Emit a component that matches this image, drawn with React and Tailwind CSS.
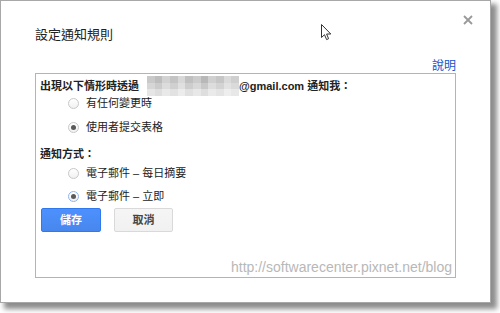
import React, { useState } from "react";

const mosaic = [
  "#c9c9c9", "#bdbdbd", "#d2d2d2", "#c4c4c4", "#d8d8d8", "#c0c0c0", "#cccccc", "#b8b8b8", "#d0d0d0", "#c6c6c6", "#dadada", "#cfcfcf",
  "#d6d6d6", "#cbcbcb", "#dcdcdc", "#d0d0d0", "#e0e0e0", "#cdcdcd", "#d8d8d8", "#c8c8c8", "#dddddd", "#d3d3d3", "#e2e2e2", "#dadada",
  "#e6e6e6", "#dedede", "#e9e9e9", "#e2e2e2", "#ececec", "#e0e0e0", "#e8e8e8", "#dedede", "#eaeaea", "#e4e4e4", "#eeeeee", "#e8e8e8",
];

const Radio = ({ checked, focused, label, onClick }) => (
  <div className="flex items-center h-[16px] pl-[28px] cursor-pointer" onClick={onClick}>
    <span
      className={`w-[11px] h-[11px] rounded-full border bg-gradient-to-b from-white to-[#f1f1f1] flex items-center justify-center ${
        focused ? "border-[#8fb4f0]" : "border-[#c8c8c8]"
      }`}
    >
      {checked && <span className="w-[5px] h-[5px] rounded-full bg-[#5a5a5a]" />}
    </span>
    <span className="ml-[7px] text-[11px] text-[#222]">{label}</span>
  </div>
);

const App = () => {
  const [when, setWhen] = useState("form");
  const [how, setHow] = useState("now");

  return (
    <div
      className="w-[500px] h-[313px] bg-white relative overflow-hidden"
      style={{ fontFamily: '"Liberation Sans", Arial, "Noto Sans CJK TC", sans-serif' }}
    >
      <div className="w-[491px] h-[303px] bg-white border border-[#a8a8a8] shadow-[5px_5px_5px_1px_rgba(0,0,0,0.45)] flex flex-col px-[34px] relative">
        <div className="flex justify-between items-start">
          <h1 className="mt-[26px] text-[13px] leading-[16px] text-[#222] font-normal">設定通知規則</h1>
          <button className="mt-[14px] -mr-[17px] w-[10px] h-[10px] text-[#999]">
            <svg width="10" height="10" viewBox="0 0 10 10">
              <path d="M1 1 L9 9 M9 1 L1 9" stroke="currentColor" strokeWidth="1.8" />
            </svg>
          </button>
        </div>

        <div className="flex justify-end mt-[16px]">
          <a href="#" className="text-[12px] leading-[14px] text-[#1155cc]">說明</a>
        </div>

        <div className="w-[421px] h-[205px] border border-[#b4b4b4] flex flex-col pl-[4px] pr-[3px]">
          <div className="flex items-center h-[16px] mt-[4px] text-[11px] font-bold text-[#222]">
            <span>出現以下情形時透過</span>
            <span className="ml-[8px] w-[92px] h-[20px] grid grid-cols-12">
              {mosaic.map((c, i) => (
                <span key={i} style={{ backgroundColor: c }} />
              ))}
            </span>
            <span>@gmail.com 通知我：</span>
          </div>

          <div className="mt-[1px]">
            <Radio label="有任何變更時" checked={when === "any"} onClick={() => setWhen("any")} />
          </div>
          <div className="mt-[8px]">
            <Radio label="使用者提交表格" checked={when === "form"} onClick={() => setWhen("form")} />
          </div>

          <div className="flex items-center h-[16px] mt-[11px] text-[11px] font-bold text-[#222]">通知方式：</div>

          <div className="mt-[3px]">
            <Radio label="電子郵件 – 每日摘要" checked={how === "daily"} onClick={() => setHow("daily")} />
          </div>
          <div className="mt-[7px]">
            <Radio label="電子郵件 – 立即" focused checked={how === "now"} onClick={() => setHow("now")} />
          </div>

          <div className="flex gap-[13px] mt-[4px] pl-[1px]">
            <button className="w-[60px] h-[24px] rounded-[2px] border border-[#3079ed] bg-gradient-to-b from-[#4d90fe] to-[#4787ed] text-white text-[11px] font-bold">
              儲存
            </button>
            <button className="w-[59px] h-[24px] rounded-[2px] border border-[#d9d9d9] bg-gradient-to-b from-[#f5f5f5] to-[#f1f1f1] text-[#444] text-[11px] font-bold">
              取消
            </button>
          </div>

          <div className="flex justify-end mt-[27px] text-[14px] leading-[16px] text-[#b8b8b8]">
            http://softwarecenter.pixnet.net/blog
          </div>
        </div>
      </div>

      <svg className="absolute left-[321px] top-[24px]" width="11" height="17" viewBox="0 0 11 17">
        <path d="M0.5 0.5 L0.5 13.5 L3.5 10.7 L5.6 15.6 L7.6 14.7 L5.6 10 L9.8 10 Z" fill="white" stroke="#333" strokeWidth="1" strokeLinejoin="round" />
      </svg>
    </div>
  );
};

export default App;
